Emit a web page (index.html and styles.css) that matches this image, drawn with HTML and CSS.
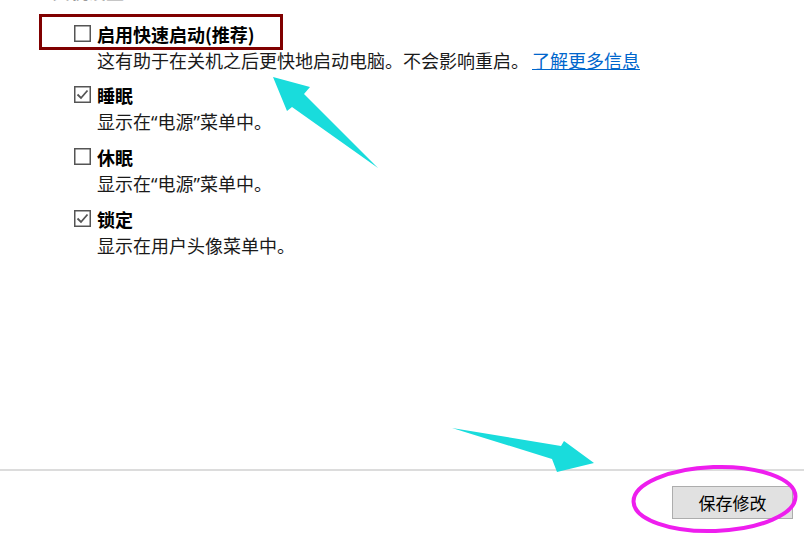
FILE: index.html
```html
<!DOCTYPE html>
<html lang="zh-CN">
<head>
    <meta charset="UTF-8">
    <title>关机设置</title>
    <link rel="stylesheet" href="styles.css">
</head>
<body>
    <div class="page">
        <div class="content">
            <h2 class="section-title">关机设置</h2>

            <div class="options">
                <div class="option">
                    <label class="option-title">
                        <svg class="box" width="17" height="17" viewBox="0 0 17 17"><rect x="0.75" y="0.75" width="15.5" height="15.5" fill="#fff" stroke="#555" stroke-width="1.5"/></svg>
                        <span>启用快速启动(推荐)</span>
                    </label>
                    <div class="option-desc">这有助于在关机之后更快地启动电脑。不会影响重启。<a href="#" class="more">了解更多信息</a></div>
                </div>

                <div class="option">
                    <label class="option-title">
                        <svg class="box" width="17" height="17" viewBox="0 0 17 17"><rect x="0.75" y="0.75" width="15.5" height="15.5" fill="#fff" stroke="#555" stroke-width="1.5"/><path d="M3.5 8.5 L7 12 L13.5 4.5" fill="none" stroke="#555" stroke-width="1.8"/></svg>
                        <span>睡眠</span>
                    </label>
                    <div class="option-desc">显示在<span class="q">“</span>电源<span class="q">”</span>菜单中。</div>
                </div>

                <div class="option">
                    <label class="option-title">
                        <svg class="box" width="17" height="17" viewBox="0 0 17 17"><rect x="0.75" y="0.75" width="15.5" height="15.5" fill="#fff" stroke="#555" stroke-width="1.5"/></svg>
                        <span>休眠</span>
                    </label>
                    <div class="option-desc">显示在<span class="q">“</span>电源<span class="q">”</span>菜单中。</div>
                </div>

                <div class="option">
                    <label class="option-title">
                        <svg class="box" width="17" height="17" viewBox="0 0 17 17"><rect x="0.75" y="0.75" width="15.5" height="15.5" fill="#fff" stroke="#555" stroke-width="1.5"/><path d="M3.5 8.5 L7 12 L13.5 4.5" fill="none" stroke="#555" stroke-width="1.8"/></svg>
                        <span>锁定</span>
                    </label>
                    <div class="option-desc">显示在用户头像菜单中。</div>
                </div>
            </div>
        </div>

        <div class="footer">
            <button type="button" class="save">保存修改</button>
        </div>

        <!-- annotations drawn over the screenshot -->
        <div class="mark-box"></div>
        <svg class="marks" width="804" height="541" viewBox="0 0 804 541">
            <polygon points="273,77 310,87 304,94 378,168 292,107 287,111" fill="#19dcdc"/>
            <polygon points="452,428 561,446 564,441 594,463 557,472 552,459" fill="#19dcdc"/>
            <ellipse cx="714.5" cy="499" rx="81" ry="32" fill="none" stroke="#ee1eee" stroke-width="4" transform="rotate(-2 714.5 499)"/>
        </svg>
    </div>
</body>
</html>
```

FILE: styles.css
```css
body {
    margin: 0;
    padding: 0;
    background: #fff;
    font-family: "Noto Sans CJK SC", "Microsoft YaHei", sans-serif;
    color: #1a1a1a;
}
.page {
    position: relative;
    width: 804px;
    height: 541px;
    overflow: hidden;
    display: flex;
    flex-direction: column;
}
.content {
    flex: 1;
}
.section-title {
    margin: -22px 0 0 52px;
    height: 26px;
    font-size: 18px;
    line-height: 26px;
    font-weight: bold;
    color: #9a9a9a;
}
.options {
    padding-left: 74px;
    margin-top: 16px;
}
.option {
    margin-bottom: 8px;
}
.option-title {
    display: flex;
    align-items: center;
    gap: 6px;
    height: 27px;
    font-size: 18px;
    font-weight: bold;
    color: #000;
}
.box {
    flex: none;
}
.option-desc {
    padding-left: 23px;
    font-size: 18px;
    line-height: 26px;
    color: #1a1a1a;
}
.q {
    font-family: "Noto Sans", sans-serif;
}
.more {
    margin-left: 3px;
    color: #0066cc;
    text-decoration: underline;
}
.footer {
    flex: none;
    height: 72px;
    border-top: 2px solid #dcdcdc;
    display: flex;
    justify-content: flex-end;
    align-items: flex-start;
    padding: 15px 11px 0 0;
    box-sizing: border-box;
}
.save {
    width: 121px;
    height: 33px;
    background: #e1e1e1;
    border: 1px solid #adadad;
    font-family: inherit;
    font-size: 17px;
    color: #000;
    padding: 0;
}
.mark-box {
    position: absolute;
    left: 39px;
    top: 14px;
    width: 238px;
    height: 30px;
    border: 3px solid #800000;
}
.marks {
    position: absolute;
    left: 0;
    top: 0;
    pointer-events: none;
}
```
